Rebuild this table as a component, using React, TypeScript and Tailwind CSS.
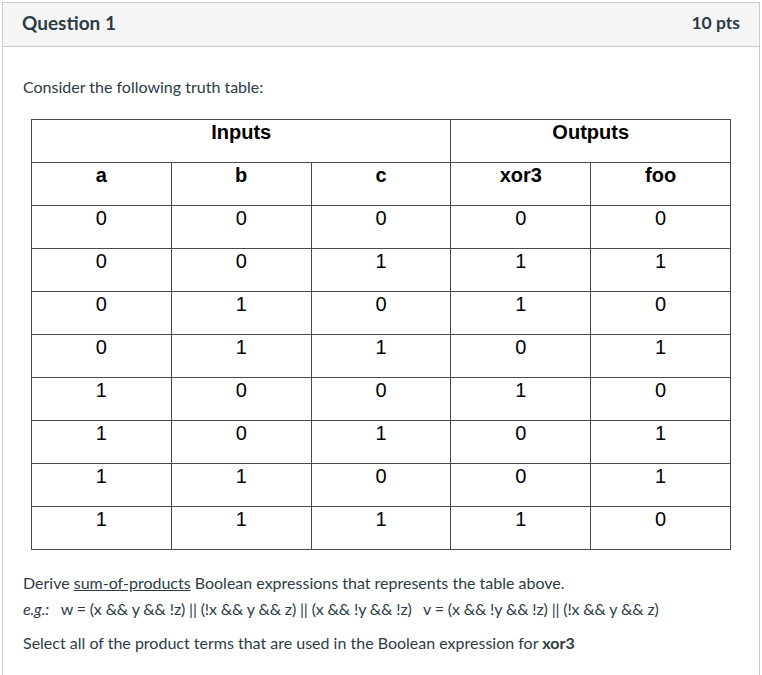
const rows: number[][] = [
  [0, 0, 0, 0, 0],
  [0, 0, 1, 1, 1],
  [0, 1, 0, 1, 0],
  [0, 1, 1, 0, 1],
  [1, 0, 0, 1, 0],
  [1, 0, 1, 0, 1],
  [1, 1, 0, 0, 1],
  [1, 1, 1, 1, 0],
];

const cols = ["a", "b", "c", "xor3", "foo"];

export default function App() {
  return (
    <div className="min-h-[675px] bg-white pt-[2px] pl-[2px] pr-[2px]">
      <div className="border border-[#c7cdd1] text-[#2d3b45] font-['Lato','Noto_Sans',sans-serif] min-h-[700px]">
        {/* question header */}
        <div className="h-[44px] bg-[#f5f5f5] border-b border-[#c7cdd1] flex items-center justify-between pl-[19px] pr-[19px] pb-[3px]">
          <h2 className="text-[19px] font-bold">Question 1</h2>
          <span className="text-[17.5px] font-bold">10 pts</span>
        </div>

        <div className="pl-[20px] pr-[20px] pt-[28px]">
          <p className="text-[16px] leading-[24px]">Consider the following truth table:</p>

          <table className="mt-[20px] ml-[8px] w-[700px] table-fixed border-collapse font-['Liberation_Sans',Arial,sans-serif] text-black text-[20px] leading-[23px]">
            <tbody>
              <tr>
                <th colSpan={3} className="border border-[#4a4a4a] h-[43px] align-top pt-[1px] font-bold">
                  Inputs
                </th>
                <th colSpan={2} className="border border-[#4a4a4a] h-[43px] align-top pt-[1px] font-bold">
                  Outputs
                </th>
              </tr>
              <tr>
                {cols.map((c) => (
                  <th key={c} className="border border-[#4a4a4a] h-[43px] align-top pt-[1px] font-bold">
                    {c}
                  </th>
                ))}
              </tr>
              {rows.map((r, i) => (
                <tr key={i}>
                  {r.map((v, j) => (
                    <td key={j} className="border border-[#4a4a4a] h-[43px] align-top text-center pt-[1px]">
                      {v}
                    </td>
                  ))}
                </tr>
              ))}
            </tbody>
          </table>

          <div className="mt-[20px] text-[16px] leading-[26px]">
            <p>
              Derive <span className="underline">sum-of-products</span> Boolean expressions that represents the table above.
            </p>
            <p className="whitespace-pre tracking-[-0.15px]">
              <em>e.g.:</em>
              {"   w = (x && y && !z) || (!x && y && z) || (x && !y && !z)   v = (x && !y && !z) || (!x && y && z)"}
            </p>
            <p className="mt-[8px]">
              Select all of the product terms that are used in the Boolean expression for <strong>xor3</strong>
            </p>
          </div>
        </div>
      </div>
    </div>
  );
}
